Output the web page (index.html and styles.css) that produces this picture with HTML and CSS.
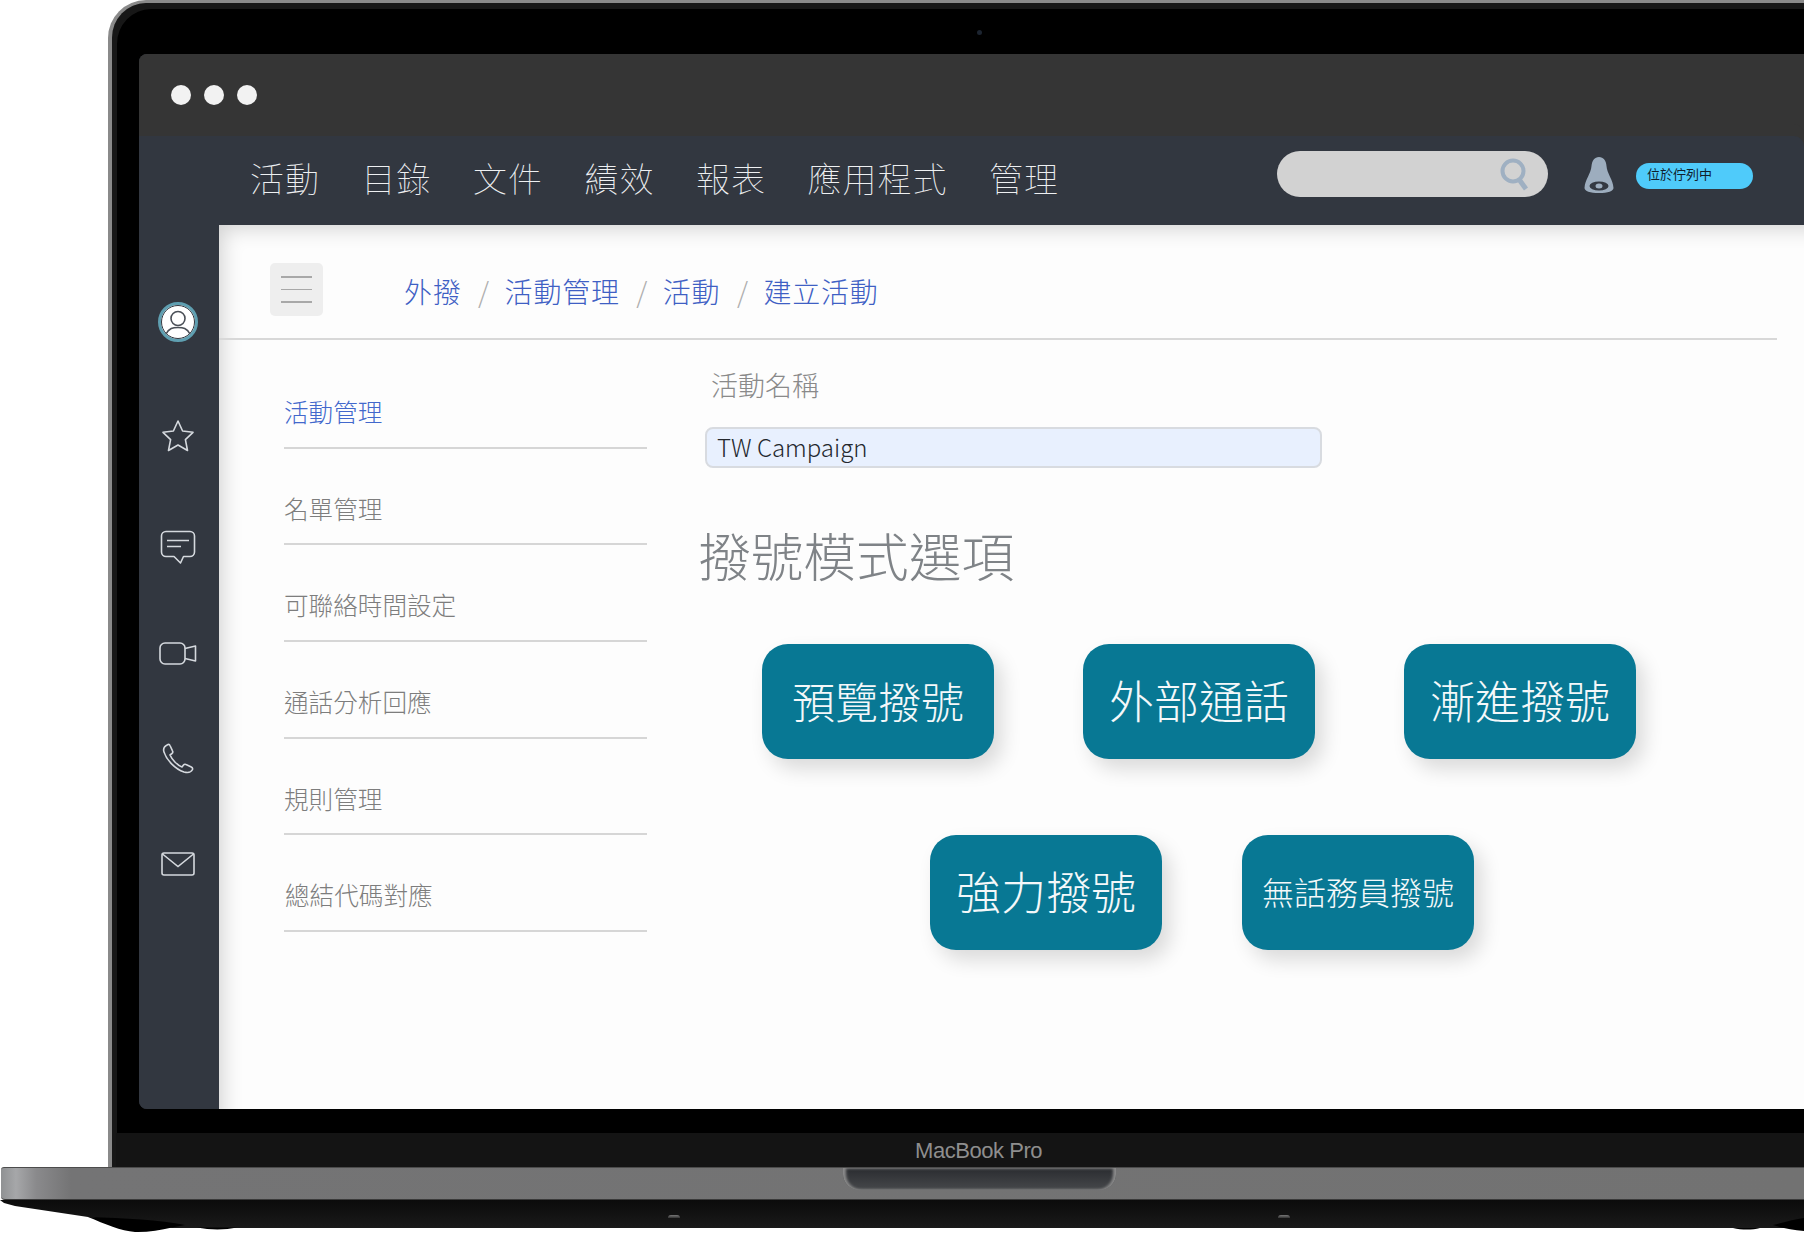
FILE: index.html
```html
<!DOCTYPE html>
<html lang="zh-Hant">
<head>
<meta charset="utf-8">
<title>建立活動</title>
<link rel="stylesheet" href="styles.css">
</head>
<body>
<div class="laptop">
  <div class="lid">
    <span class="camera"></span>
    <div class="screen">
      <div class="titlebar">
        <span class="dot"></span><span class="dot"></span><span class="dot"></span>
      </div>
      <header class="appbar">
        <nav class="topnav">
          <a>活動</a><a>目錄</a><a>文件</a><a>績效</a><a>報表</a><a>應用程式</a><a>管理</a>
        </nav>
        <div class="search">
          <svg class="search-icon" viewBox="0 0 30 34" width="30" height="34"><circle cx="13" cy="13" r="10.5" fill="none" stroke="#9fb0c2" stroke-width="4"/><path d="M19.5 22 L26 31" stroke="#9fb0c2" stroke-width="5" fill="none"/></svg>
        </div>
        <svg class="bell" viewBox="0 0 30 36" width="30" height="36"><path d="M15 0 C10.500 0 8 3.500 7.500 9 C7 17 1 22 .5 31 C.5 34 6 36 15 36 C24 36 29.500 34 29.500 31 C29 22 23 17 22.500 9 C22 3.500 19.500 0 15 0 Z" fill="#9dadbe"/><ellipse cx="15" cy="29" rx="9.500" ry="4.500" fill="#343942"/><ellipse cx="15" cy="29" rx="3.500" ry="2.500" fill="#9dadbe"/></svg>
        <span class="status">位於佇列中</span>
      </header>
      <div class="workspace">
        <aside class="rail">
          <svg class="rail-icon" viewBox="0 0 40 40" width="40" height="40"><circle cx="20" cy="20" r="18.500" fill="#fff" stroke="#5f9fb1" stroke-width="3"/><circle cx="20" cy="20" r="16.500" fill="none" stroke="#323740" stroke-width="1"/><circle cx="20" cy="16.500" r="7" fill="none" stroke="#4a4f57" stroke-width="1.600"/><path d="M8 32 C11 26 15 25.500 20 25.500 C25 25.500 29 26 32 32" fill="none" stroke="#4a4f57" stroke-width="1.600"/></svg>
          <svg class="rail-icon" viewBox="0 0 34 34" width="34" height="34"><path d="M17 2 L21.600 12 L32 13.300 L24.400 20.600 L26.500 31.500 L17 26 L7.500 31.500 L9.600 20.600 L2 13.300 L12.400 12 Z" fill="none" stroke="#d5d9de" stroke-width="1.600" stroke-linejoin="round"/></svg>
          <svg class="rail-icon" viewBox="0 0 36 35" width="36" height="35"><path d="M6 1.500 H30 A4.500 4.500 0 0 1 34.500 6 V22 A4.500 4.500 0 0 1 30 26.500 H23.500 L20.500 33 L14 26.500 H6 A4.500 4.500 0 0 1 1.500 22 V6 A4.500 4.500 0 0 1 6 1.500 Z" fill="none" stroke="#d5d9de" stroke-width="1.600" stroke-linejoin="round"/><path d="M7 10.500 H29 M7 16.500 H21" stroke="#d5d9de" stroke-width="1.600" fill="none"/></svg>
          <svg class="rail-icon" viewBox="0 0 38 23" width="38" height="23"><rect x="1" y="1" width="25" height="21" rx="5" fill="none" stroke="#d5d9de" stroke-width="1.600"/><path d="M26 6.500 L36.500 4 V19 L26 16.500" fill="none" stroke="#d5d9de" stroke-width="1.600" stroke-linejoin="round"/></svg>
          <svg class="rail-icon phone" viewBox="0 0 32 31" width="32" height="31"><path d="M6 1.500 C2.500 3 1 6 2 9 C4.500 17 13 26 22 29 C25.500 30 29 29.500 30.500 26.500 C30.800 25.500 30.300 24.500 29.300 24 L24 21.500 C23 21 22 21.300 21.300 22.200 L20 24 C15 22 10 16.500 8 12 L10 10.500 C10.800 9.800 11 8.800 10.500 7.800 L8 2.500 C7.600 1.600 6.800 1.200 6 1.500 Z" fill="none" stroke="#d5d9de" stroke-width="1.600" stroke-linejoin="round"/></svg>
          <svg class="rail-icon mail" viewBox="0 0 34 24" width="34" height="24"><rect x="1" y="1" width="32" height="22" rx="2" fill="none" stroke="#d5d9de" stroke-width="1.600"/><path d="M1.500 2 L17 14.500 L32.500 2" fill="none" stroke="#d5d9de" stroke-width="1.600"/></svg>
        </aside>
        <main class="content">
          <div class="toolbar">
            <button class="menu-btn" type="button" aria-label="menu"><span></span><span></span><span></span></button>
            <ol class="crumbs">
              <li>外撥</li><li class="sep">/</li><li>活動管理</li><li class="sep">/</li><li>活動</li><li class="sep">/</li><li>建立活動</li>
            </ol>
          </div>
          <div class="panels">
            <ul class="sidemenu">
              <li class="active">活動管理</li>
              <li>名單管理</li>
              <li>可聯絡時間設定</li>
              <li>通話分析回應</li>
              <li>規則管理</li>
              <li class="last">總結代碼對應</li>
            </ul>
            <section class="form">
              <label class="field-label">活動名稱</label>
              <div class="field">TW Campaign</div>
              <h2 class="section-title">撥號模式選項</h2>
              <div class="btn-row first">
                <button class="mode medium" type="button">預覽撥號</button>
                <button class="mode" type="button">外部通話</button>
                <button class="mode" type="button">漸進撥號</button>
              </div>
              <div class="btn-row second">
                <button class="mode" type="button">強力撥號</button>
                <button class="mode small" type="button">無話務員撥號</button>
              </div>
            </section>
          </div>
        </main>
      </div>
    </div>
    <div class="chin"><span class="brand">MacBook Pro</span></div>
  </div>
  <div class="base"><div class="notch"></div></div>
  <div class="underside">
    <span class="port port-a"></span>
    <span class="port port-b"></span>
  </div>
  <svg class="foot foot-left" viewBox="0 0 155 20" width="155" height="20"><path d="M3 2 C40 3 75 5 100 10 L87 12.500 C75 15 62 17.500 50 17 C36 16 20 9 3 2 Z" fill="#000"/><path d="M112 12.500 H152 C140 15 125 15 112 12.500 Z" fill="#000"/></svg>
  <svg class="foot foot-right" viewBox="0 0 74 18" width="74" height="18"><path d="M3 12 H30 C22 14 12 14 3 12 Z" fill="#000"/><path d="M43 9 C55 6 65 3 74 2 V15 C62 14 52 12 43 9 Z" fill="#000"/></svg>
</div>
</body>
</html>
```

FILE: styles.css
```css
* { box-sizing: border-box; }
html, body { margin: 0; padding: 0; }
body {
  width: 1804px;
  height: 1236px;
  overflow: hidden;
  background: #fff;
  font-family: "Noto Sans CJK TC", "Noto Sans", sans-serif;
  font-weight: 300;
}
ul, ol { list-style: none; margin: 0; padding: 0; }
button { font: inherit; border: 0; padding: 0; }

.laptop { position: relative; width: 1804px; height: 1236px; }

/* lid */
.lid {
  position: relative;
  margin-left: 108px;
  width: 1696px;
  height: 1167px;
  padding: 51px 0 0 27px;
  background: #000;
  border-top: 3px solid #8a8a8a;
  border-left: 4px solid #8a8a8a;
  border-top-left-radius: 38px;
  box-shadow: inset 5px 6px 0 #171717;
}
.camera {
  position: absolute;
  left: 865px;
  top: 27px;
  width: 5px;
  height: 5px;
  border-radius: 50%;
  background: #1c2430;
}
.screen {
  width: 1665px;
  height: 1055px;
  border-radius: 8px 0 0 8px;
  overflow: hidden;
  display: flex;
  flex-direction: column;
  background: #323740;
}
.titlebar {
  height: 82px;
  flex: none;
  background: #353535;
  display: flex;
  align-items: center;
  gap: 13px;
  padding-left: 32px;
}
.dot { width: 20px; height: 20px; border-radius: 50%; background: #f2f2f2; }

/* app bar */
.appbar {
  height: 89px;
  flex: none;
  display: flex;
  align-items: center;
  background: #323740;
  padding-left: 111px;
  border-top-right-radius: 10px;
  box-shadow: 0 -12px 0 #353535;
}
.topnav {
  display: flex;
  gap: 41.500px;
  width: 1027px;
  margin-top: -6px;
  font-size: 34px;
  letter-spacing: 1px;
  font-weight: 100;
  color: #eef0f2;
}
.search {
  width: 271px;
  height: 46px;
  margin-top: -14px;
  border-radius: 23px;
  background: #d2d2d2;
  display: flex;
  align-items: center;
  justify-content: flex-end;
  padding-right: 18px;
}
.search-icon { flex: none; margin-top: 2px; }
.bell { margin: -12px 0 0 36px; flex: none; }
.status {
  width: 117px;
  height: 26px;
  margin: -10px 0 0 22px;
  padding-left: 11px;
  border-radius: 13px;
  background: #4fcbfa;
  color: #10202c;
  font-size: 13px;
  font-weight: 400;
  line-height: 22px;
  flex: none;
}

/* body */
.workspace { flex: 1; display: flex; min-height: 0; }
.rail {
  width: 80px;
  flex: none;
  display: flex;
  flex-direction: column;
  align-items: center;
  gap: 77px;
  padding: 77px 2px 0 0;
  background: #323740;
}
.rail-icon { flex: none; }
.rail-icon.phone { margin-top: 1px; }
.rail-icon.mail { margin-top: 1px; }
.content {
  flex: 1;
  background: #fdfdfd;
  box-shadow: inset 16px 16px 20px -12px rgba(0, 0, 0, .17);
}
.toolbar {
  height: 115px;
  margin-right: 27px;
  padding-left: 51px;
  border-bottom: 2px solid #d8d8d8;
  display: flex;
  align-items: flex-start;
}
.menu-btn {
  width: 53px;
  height: 53px;
  margin-top: 38px;
  border-radius: 5px;
  background: #eeeeee;
  display: flex;
  flex-direction: column;
  align-items: center;
  justify-content: center;
  gap: 11px;
}
.menu-btn span { width: 31px; height: 1.500px; background: #a8a8a8; }
.crumbs {
  display: flex;
  gap: 16.500px;
  margin: 44px 0 0 81px;
  font-size: 28px;
  line-height: 44px;
  letter-spacing: .8px;
  font-weight: 200;
  color: #3f5fc4;
}
.crumbs .sep { color: #aeaeae; width: 10px; letter-spacing: 0; }

.panels { display: flex; }
.sidemenu {
  width: 363px;
  margin: 12px 0 0 65px;
  flex: none;
  font-size: 24.600px;
  font-weight: 200;
  color: #7d7d7d;
}
.sidemenu li {
  height: 96.700px;
  padding-top: 41px;
  line-height: 36px;
  border-bottom: 2px solid #d6d6d6;
}
.sidemenu .active { color: #4268cc; }
.sidemenu .last { padding-left: 1px; }

.form { margin-left: 58px; flex: none; width: 960px; }
.field-label {
  display: block;
  margin: 24px 0 0 6px;
  font-size: 27px;
  font-weight: 200;
  line-height: 42px;
  color: #8a8a8a;
}
.field {
  width: 617px;
  height: 41px;
  margin-top: 21px;
  padding-left: 10px;
  border: 2px solid #d8dbe0;
  border-radius: 8px;
  background: #e8f0fe;
  font-size: 24px;
  font-weight: 300;
  line-height: 35px;
  color: #24282e;
}
.section-title {
  margin: 47px 0 0 -7px;
  font-size: 52.700px;
  line-height: 78px;
  font-weight: 200;
  color: #7f8387;
}
.btn-row { display: flex; }
.btn-row.first { margin: 51px 0 0 57px; gap: 89px; }
.btn-row.second { margin: 76px 0 0 225px; gap: 80px; }
.mode {
  width: 232px;
  height: 115px;
  padding-bottom: 4px;
  border-radius: 26px;
  background: #087894;
  color: #f4f8fa;
  font-family: inherit;
  font-weight: 200;
  font-size: 45px;
  box-shadow: 8px 10px 20px rgba(0, 0, 0, .14);
}
.mode.medium { font-size: 43px; }
.mode.small { font-size: 32px; }

/* lower body */
.chin {
  width: 1692px;
  height: 34px;
  margin: 24px 0 0 -23px;
  background: #141414;
  display: flex;
}
.brand {
  margin-left: 799px;
  font-family: "Liberation Sans", Arial, sans-serif;
  font-weight: 400;
  font-size: 22px;
  line-height: 36px;
  letter-spacing: -.45px;
  color: #8e8e8e;
}
.base {
  height: 33px;
  margin-left: 1px;
  padding-left: 842px;
  border-top: 1px solid #4c4c4c;
  border-bottom: 1px solid #3a3a3a;
  border-radius: 3px 0 0 4px;
  background: linear-gradient(90deg, #8f9193 0, #a6a7a9 15px, #8a8a8c 35px, #747475 70px, #727272 100%);
}
.notch {
  width: 273px;
  height: 22px;
  border-radius: 0 0 16px 16px;
  background: linear-gradient(180deg, #2a2c30, #46484b);
  box-shadow: inset 3px 0 3px #8c8c8c, inset -3px 0 3px #8c8c8c;
}
.underside {
  position: relative;
  height: 28px;
  background: linear-gradient(180deg, #0b0b0b, #1a1a1a);
  clip-path: polygon(0 0, 100% 0, 100% 100%, 172px 100%, 88px 17px, 15px 6px, 4px 3px);
}
.port {
  position: absolute;
  top: 15px;
  width: 12px;
  height: 3px;
  border-radius: 3px 3px 0 0;
  background: linear-gradient(180deg, #777, #333);
}
.port-a { left: 668px; }
.port-b { left: 1278px; }
.foot { position: absolute; }
.foot-left { left: 85px; top: 1215px; }
.foot-right { right: 0; top: 1216px; }
```
